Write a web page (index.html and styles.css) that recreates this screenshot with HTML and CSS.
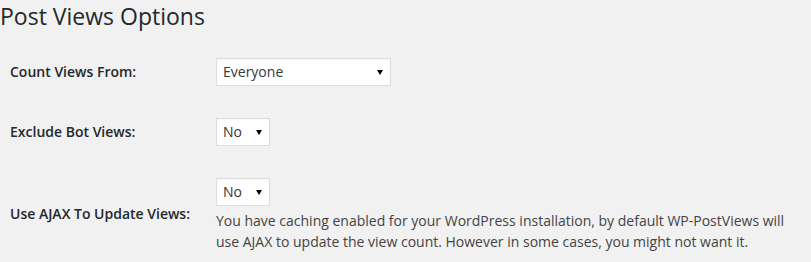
FILE: index.html
```html
<!DOCTYPE html>
<html lang="en">
<head>
<meta charset="utf-8">
<title>Post Views Options</title>
<link rel="stylesheet" href="styles.css">
</head>
<body>
<div class="wrap">
  <h2 class="title">Post Views Options</h2>
  <div class="form-table">
    <div class="row">
      <label class="label" for="count">Count Views From:</label>
      <div class="field">
        <select id="count" class="select select-wide">
          <option>Everyone</option>
          <option>Guests Only</option>
          <option>Registered Users Only</option>
        </select>
      </div>
    </div>
    <div class="row">
      <label class="label" for="bots">Exclude Bot Views:</label>
      <div class="field">
        <select id="bots" class="select select-narrow">
          <option>No</option>
          <option>Yes</option>
        </select>
      </div>
    </div>
    <div class="row">
      <label class="label" for="ajax">Use AJAX To Update Views:</label>
      <div class="field">
        <select id="ajax" class="select select-narrow">
          <option>No</option>
          <option>Yes</option>
        </select>
        <p class="description">You have caching enabled for your WordPress installation, by default WP-PostViews will use AJAX to update the view count. However in some cases, you might not want it.</p>
      </div>
    </div>
  </div>
</div>
</body>
</html>
```

FILE: styles.css
```css
html, body {
  margin: 0;
  padding: 0;
  background: #f1f1f1;
}

body {
  font-family: "Open Sans", "Noto Sans", sans-serif;
  font-size: 14px;
  color: #444;
}

.wrap {
  padding: 0;
}

.title {
  margin: 0;
  padding: 2px 0 0 0;
  font-size: 23px;
  font-weight: 400;
  line-height: 29px;
  color: #23282d;
}

.form-table {
  margin-top: 11px;
}

.row {
  display: grid;
  grid-template-columns: 215px 1fr;
  align-items: center;
}

.label {
  padding: 20px 0 20px 10px;
  font-weight: 600;
  font-size: 14px;
  line-height: 1.3;
  color: #23282d;
}

.field {
  padding: 15px 10px 15px 0;
}

.select {
  display: block;
  margin: 1px;
  height: 28px;
  padding: 0 20px 0 6px;
  border: 1px solid #ddd;
  border-radius: 0;
  background-color: #fff;
  background-image: url("data:image/svg+xml;utf8,<svg xmlns='http://www.w3.org/2000/svg' width='6' height='5' viewBox='0 0 6 5'><path d='M0 0h6L3 5z' fill='%23000'/></svg>");
  background-repeat: no-repeat;
  background-position: right 7px center;
  background-size: 6px 5px;
  box-shadow: inset 0 1px 2px rgba(0, 0, 0, 0.04);
  -webkit-appearance: none;
  appearance: none;
  font-family: "Open Sans", "Noto Sans", sans-serif;
  font-size: 14px;
  line-height: 26px;
  color: #32373c;
}

.select-wide {
  width: 175px;
}

.select-narrow {
  width: 54px;
}

.description {
  margin: 4px 0 0 1px;
  font-size: 14px;
  line-height: 1.5;
  color: #444;
}
```
